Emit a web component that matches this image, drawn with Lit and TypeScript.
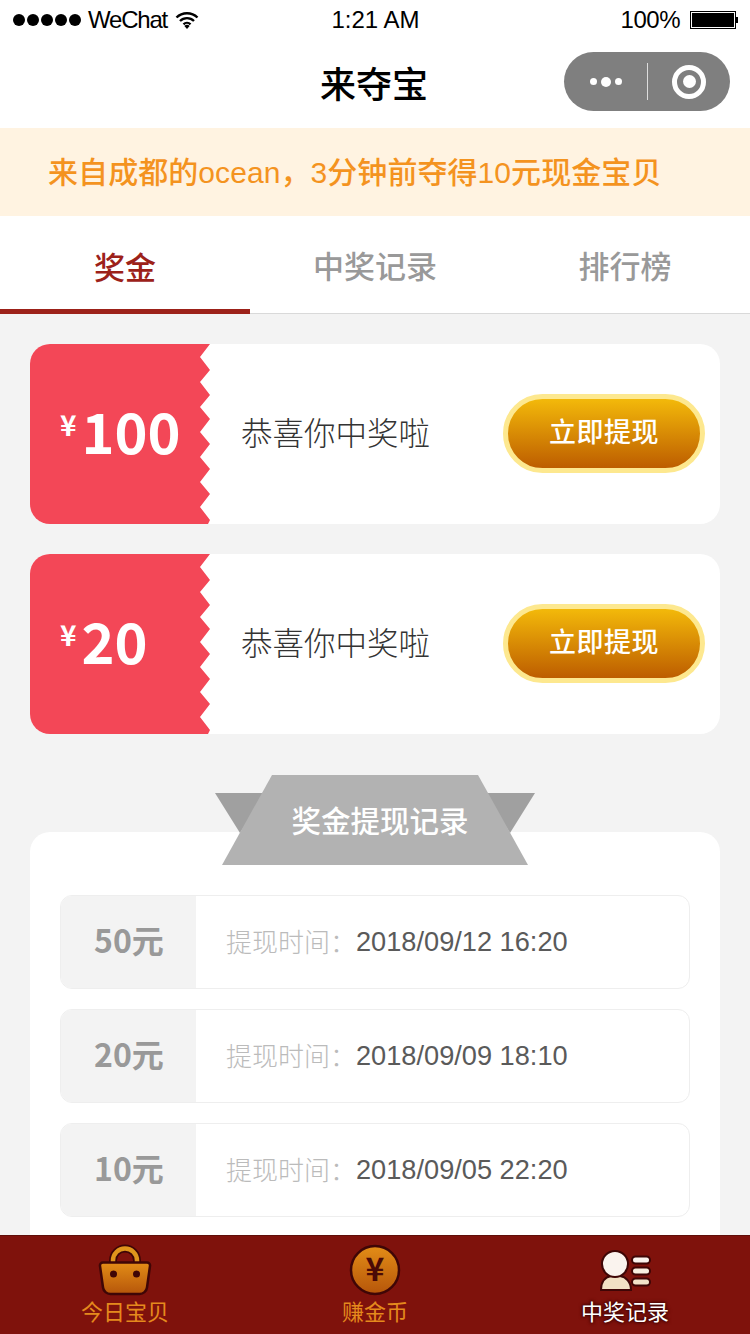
import { LitElement, html, css, svg } from 'lit';
import { customElement } from 'lit/decorators.js';

const prizes = [{ amount: '100' }, { amount: '20' }];

const records = [
  { amount: '50元', time: '2018/09/12 16:20' },
  { amount: '20元', time: '2018/09/09 18:10' },
  { amount: '10元', time: '2018/09/05 22:20' },
];

const bagIcon = svg`
  <svg class="icon bag" width="56" height="56" viewBox="0 0 56 56">
    <defs>
      <linearGradient id="bag" x1="0" y1="0" x2="0" y2="1">
        <stop offset="0" stop-color="#e38d17" /><stop offset="1" stop-color="#b6560a" />
      </linearGradient>
    </defs>
    <path d="M16 22v-3.500a12 12 0 0 1 24 0v3.500" fill="none" stroke="#3f0606" stroke-width="8" />
    <path d="M16 22v-3.500a12 12 0 0 1 24 0v3.500" fill="none" stroke="#e0951c" stroke-width="4.500" />
    <path d="M6 20.500h44a3 3 0 0 1 3 3.500l-3 21.500a7.500 7.500 0 0 1-7.500 6.500h-29a7.500 7.500 0 0 1-7.500-6.500l-3-21.500a3 3 0 0 1 3-3.500z" fill="url(#bag)" stroke="#3f0606" stroke-width="2.500" />
    <circle cx="16.500" cy="32" r="3.500" fill="#3f0606" />
    <circle cx="39.500" cy="32" r="3.500" fill="#3f0606" />
  </svg>`;

const coinIcon = svg`
  <svg class="icon coin" width="52" height="52" viewBox="0 0 52 52">
    <defs>
      <linearGradient id="coin" x1="0" y1="0" x2="0" y2="1">
        <stop offset="0" stop-color="#e38d17" /><stop offset="1" stop-color="#b6560a" />
      </linearGradient>
    </defs>
    <circle cx="26" cy="26" r="24" fill="url(#coin)" stroke="#3f0606" stroke-width="2.500" />
    <text x="26" y="37" text-anchor="middle" font-size="32" font-weight="700" fill="#4a0a06" font-family="Noto Sans CJK SC, sans-serif">¥</text>
  </svg>`;

const personIcon = svg`
  <svg class="icon person" width="56" height="44" viewBox="0 0 56 44">
    <path d="M4 41c0-8 4-13 10-14h9c6 1 11 6 11 14z" fill="#f1e0c4" stroke="#3f0606" stroke-width="2" />
    <circle cx="18" cy="15" r="13" fill="#faf3ee" stroke="#3f0606" stroke-width="2" />
    <path d="M38.500 11h11M38.500 22h11M38.500 33h11" stroke="#3f0606" stroke-width="9" stroke-linecap="round" />
    <path d="M38.500 11h11" stroke="#faf3ee" stroke-width="5" stroke-linecap="round" />
    <path d="M38.500 22h11" stroke="#f8eee0" stroke-width="5" stroke-linecap="round" />
    <path d="M38.500 33h11" stroke="#f3e3c9" stroke-width="5" stroke-linecap="round" />
  </svg>`;

@customElement('app-root')
export class AppRoot extends LitElement {
  static styles = css`
    :host {
      display: flex;
      flex-direction: column;
      width: 750px;
      height: 1334px;
      overflow: hidden;
      background: #f3f3f3;
      font-family: "Noto Sans CJK SC", "Noto Sans", sans-serif;
    }

    .status {
      height: 40px;
      flex: none;
      display: grid;
      grid-template-columns: 1fr auto 1fr;
      align-items: center;
      padding: 0 12px 0 13px;
      background: #fff;
      color: #000;
      font-family: "Liberation Sans", sans-serif;
      font-size: 24px;
    }
    .status-left { display: flex; align-items: center; }
    .dots { display: flex; gap: 2px; margin-right: 7px; }
    .dots i { width: 12px; height: 12px; border-radius: 50%; background: #000; }
    .carrier { letter-spacing: -1.200px; }
    .wifi { margin-left: 8px; }
    .status-right { display: flex; align-items: center; justify-content: flex-end; gap: 10px; }
    .percent { letter-spacing: -0.500px; }
    .battery { display: flex; align-items: center; }
    .battery i { display: block; width: 44px; height: 16px; background: #000; border: 1px solid #000; box-shadow: inset 0 0 0 1px #fff; }
    .battery b { display: block; width: 2px; height: 6px; background: #000; }

    .nav {
      height: 88px;
      flex: none;
      box-sizing: border-box;
      padding: 0 2px 4px 0;
      display: flex;
      align-items: center;
      justify-content: center;
      position: relative;
      background: #fff;
      font-size: 36px;
      font-weight: 500;
      color: #000;
    }
    .capsule {
      position: absolute;
      left: 564px;
      top: 12px;
      width: 166px;
      height: 59px;
      border-radius: 30px;
      background: #7f7f7f;
      display: flex;
      align-items: center;
    }
    .capsule-more { width: 83px; display: flex; justify-content: center; align-items: center; gap: 4px; }
    .capsule-more i { width: 7px; height: 7px; border-radius: 50%; background: #fff; }
    .capsule-more i:nth-child(2) { width: 10px; height: 10px; }
    .capsule-line { width: 1px; height: 37px; background: #ddd; }
    .capsule-target {
      width: 82px;
      display: flex;
      justify-content: center;
    }
    .capsule-target i {
      width: 34px;
      height: 34px;
      box-sizing: border-box;
      border: 5px solid #fff;
      border-radius: 50%;
      display: flex;
      align-items: center;
      justify-content: center;
    }
    .capsule-target i::after { content: ""; width: 13px; height: 13px; border-radius: 50%; background: #fff; }

    .notice {
      height: 88px;
      flex: none;
      box-sizing: border-box;
      padding: 0 0 5px 48px;
      display: flex;
      align-items: center;
      background: #fff3e1;
      color: #f4931f;
      font-family: "Liberation Sans", "Noto Sans CJK SC", sans-serif;
      font-size: 30px;
      font-weight: 500;
      letter-spacing: 0.070px;
    }

    .tabs {
      height: 98px;
      flex: none;
      box-sizing: border-box;
      display: grid;
      grid-template-columns: repeat(3, 1fr);
      background: #fff;
      border-bottom: 1px solid #d9d9d9;
    }
    .tab {
      display: flex;
      align-items: center;
      justify-content: center;
      font-size: 31px;
      font-weight: 500;
      color: #999;
    }
    .tab.active {
      color: #9c2119;
      box-shadow: inset 0 -5px 0 #9c2119;
      margin-bottom: -1px;
    }

    .content {
      flex: 1;
      min-height: 0;
      overflow: hidden;
      padding: 30px 30px 0;
      display: flex;
      flex-direction: column;
    }

    .prize {
      height: 180px;
      flex: none;
      display: flex;
      align-items: center;
      margin-bottom: 30px;
      border-radius: 20px;
      background: #fff;
    }
    .ticket {
      width: 180px;
      height: 180px;
      flex: none;
      box-sizing: border-box;
      padding: 0 0 8px 30px;
      display: flex;
      align-items: center;
      border-radius: 20px 0 0 20px;
      background: #f34757;
      color: #fff;
      font-weight: 700;
      clip-path: polygon(
        0 0, 180px 0, 170px 13px, 180px 26px, 170px 38px, 180px 51px, 170px 63px, 180px 75px,
        170px 88px, 180px 100px, 170px 113px, 180px 125px, 170px 138px, 180px 150px, 170px 163px,
        180px 176px, 178px 180px, 0 180px
      );
    }
    .ticket small { font-size: 28px; line-height: 1; align-self: flex-start; margin: 66px 5px 0 0; font-weight: 700; }
    .ticket span { font-size: 56px; line-height: 1; }
    .prize-text { flex: 1; padding: 0 0 6px 31px; font-size: 31.500px; color: #333; font-weight: 300; }
    .withdraw {
      width: 202px;
      height: 79px;
      flex: none;
      margin: 0 15px 2px 0;
      box-sizing: border-box;
      padding-bottom: 5px;
      border: 5px solid #fde88f;
      border-radius: 40px;
      background: linear-gradient(#f3b90a, #bd5d00);
      color: #fff;
      display: flex;
      align-items: center;
      justify-content: center;
      font-size: 27px;
      font-weight: 500;
      letter-spacing: 0.500px;
    }

    .panel {
      position: relative;
      flex: 1;
      margin-top: 68px;
      padding: 63px 30px 0;
      border-radius: 20px 20px 0 0;
      background: #fff;
      display: flex;
      flex-direction: column;
      gap: 20px;
    }
    .ribbon {
      position: absolute;
      left: 185px;
      top: -57px;
      width: 320px;
      height: 90px;
    }
    .ribbon svg { position: absolute; inset: 0; }
    .ribbon span {
      position: absolute;
      inset: 0 0 0 10px;
      display: flex;
      align-items: center;
      justify-content: center;
      padding-bottom: 2px;
      color: #fff;
      font-size: 29.500px;
      font-weight: 500;
    }

    .record {
      height: 94px;
      flex: none;
      box-sizing: border-box;
      display: flex;
      border: 1px solid #eee;
      border-radius: 12px;
      overflow: hidden;
    }
    .record-amount {
      width: 135px;
      flex: none;
      box-sizing: border-box;
      padding: 0 0 7px 1px;
      background: #f3f3f3;
      display: flex;
      align-items: center;
      justify-content: center;
      color: #999;
      font-size: 32px;
      font-weight: 700;
    }
    .record-body { display: flex; align-items: center; }
    .record-label { margin-left: 30px; padding-bottom: 4px; width: 130px; font-size: 26px; color: #bbb; font-weight: 300; }
    .record-time { font-family: "Liberation Sans", sans-serif; font-size: 27.200px; color: #5a5a5a; }

    .tabbar {
      height: 99px;
      flex: none;
      display: grid;
      grid-template-columns: repeat(3, 1fr);
      background: #7f120c;
      border-top: 1px solid #5f0e09;
      box-sizing: border-box;
    }
    .tabbar-item {
      display: flex;
      flex-direction: column;
      align-items: center;
      justify-content: flex-end;
      padding-bottom: 9px;
      font-size: 22px;
      line-height: 30px;
      color: #e58a1d;
    }
    .tabbar-item.active {
      color: #fff;
      text-shadow: 0 0 2px #3f0606, 0 0 3px #3f0606, 0 0 4px #3f0606;
    }
    .icon { display: block; }
    .bag { margin-bottom: -3px; }
    .coin { margin-bottom: -1px; }
    .person { margin-bottom: 2px; }
  `;

  render() {
    return html`
      <div class="status">
        <div class="status-left">
          <div class="dots"><i></i><i></i><i></i><i></i><i></i></div>
          <span class="carrier">WeChat</span>
          <svg class="wifi" width="24" height="18" viewBox="0 0 24 18">
            <path d="M1.500 6.500a15 15 0 0 1 21 0M5 10a10 10 0 0 1 14 0M8.500 13.300a5 5 0 0 1 7 0" fill="none" stroke="#000" stroke-width="2.400" />
            <path d="M12 18l-2.600-3a3.500 3.500 0 0 1 5.200 0z" />
          </svg>
        </div>
        <div>1:21 AM</div>
        <div class="status-right">
          <span class="percent">100%</span>
          <div class="battery"><i></i><b></b></div>
        </div>
      </div>

      <div class="nav">
        来夺宝
        <div class="capsule">
          <div class="capsule-more"><i></i><i></i><i></i></div>
          <div class="capsule-line"></div>
          <div class="capsule-target"><i></i></div>
        </div>
      </div>

      <div class="notice">来自成都的ocean，3分钟前夺得10元现金宝贝</div>

      <div class="tabs">
        <div class="tab active">奖金</div>
        <div class="tab">中奖记录</div>
        <div class="tab">排行榜</div>
      </div>

      <div class="content">
        ${prizes.map(
          (p) => html`
            <div class="prize">
              <div class="ticket"><small>¥</small><span>${p.amount}</span></div>
              <div class="prize-text">恭喜你中奖啦</div>
              <div class="withdraw">立即提现</div>
            </div>
          `,
        )}

        <div class="panel">
          <div class="ribbon">
            <svg width="320" height="90" viewBox="0 0 320 90">
              <path d="M0 18h50l-25 40zM320 18h-50l25 40z" fill="#a0a0a0" />
              <path d="M57 0h206l50 90h-306z" fill="#b2b2b2" />
            </svg>
            <span>奖金提现记录</span>
          </div>
          ${records.map(
            (r) => html`
              <div class="record">
                <div class="record-amount">${r.amount}</div>
                <div class="record-body">
                  <div class="record-label">提现时间：</div>
                  <div class="record-time">${r.time}</div>
                </div>
              </div>
            `,
          )}
        </div>
      </div>

      <div class="tabbar">
        <div class="tabbar-item">${bagIcon}今日宝贝</div>
        <div class="tabbar-item">${coinIcon}赚金币</div>
        <div class="tabbar-item active">${personIcon}中奖记录</div>
      </div>
    `;
  }
}
